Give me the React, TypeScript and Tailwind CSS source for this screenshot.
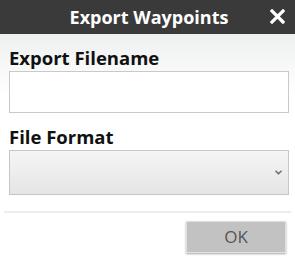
export default function App() {
  return (
    <div className="flex h-[264px] w-[295px] flex-col bg-white font-['Open_Sans',sans-serif]">
      <div className="relative flex h-[34px] shrink-0 items-center justify-center bg-[#3a3a3a]">
        <span className="pl-[3px] text-[18px] font-bold text-white">Export Waypoints</span>
        <svg
          className="absolute left-[270px] top-[9px]"
          width="15"
          height="15"
          viewBox="0 0 15 15"
        >
          <path d="M2 2 L13 13 M13 2 L2 13" stroke="white" strokeWidth="3.2" strokeLinecap="square" />
        </svg>
      </div>
      <div className="flex flex-col bg-gradient-to-b from-[#eef0f0] to-white to-[60px] px-[9px] pt-[12px]">
        <label className="text-[18.5px] font-bold leading-[24px] text-[#111]">Export Filename</label>
        <input
          type="text"
          className="mt-[1px] h-[42px] w-[280px] border border-[#c9c9c9] bg-white outline-none"
        />
        <label className="mt-[12px] text-[18.5px] font-bold leading-[24px] text-[#111]">File Format</label>
        <div className="mt-[1px] flex h-[45px] w-[280px] items-center justify-end border border-[#c6c6c6] bg-gradient-to-b from-[#f5f5f5] to-[#e5e5e5] pr-[6px]">
          <svg width="7" height="5" viewBox="0 0 7 5">
            <path d="M0.5 0.8 L3.5 3.8 L6.5 0.8" stroke="#666" strokeWidth="1.4" fill="none" />
          </svg>
        </div>
      </div>
      <div className="mx-[4px] mt-[16px] h-[2px] bg-[#ededed]" />
      <div className="flex justify-end pr-[9px] pt-[8px]">
        <button className="h-[32px] w-[100px] border border-[#e2e2e2] bg-[#c2c2c2] text-[17px] text-[#555] shadow-[0_1px_2px_rgba(0,0,0,0.35)]">
          OK
        </button>
      </div>
    </div>
  );
}
